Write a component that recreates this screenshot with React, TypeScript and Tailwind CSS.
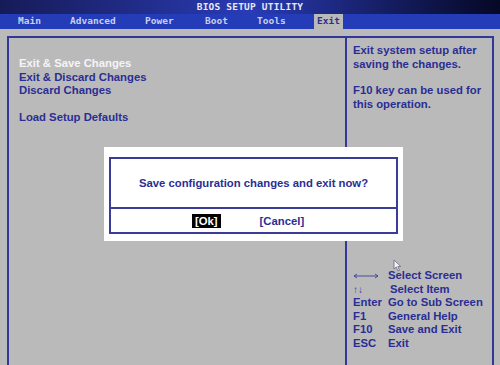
import React from 'react'

const mono = { fontFamily: '"DejaVu Sans Mono", "Liberation Mono", monospace' }

const menu = [
  { label: 'Main', w: 'w-[52px]' },
  { label: 'Advanced', w: 'w-[75px]' },
  { label: 'Power', w: 'w-[60px]' },
  { label: 'Boot', w: 'w-[52px]' },
  { label: 'Tools', w: 'w-[57px]' },
]

const legend = [
  { key: 'arrows', desc: 'Select Screen' },
  { key: '\u2191\u2193', desc: 'Select Item' },
  { key: 'Enter', desc: 'Go to Sub Screen' },
  { key: 'F1', desc: 'General Help' },
  { key: 'F10', desc: 'Save and Exit' },
  { key: 'ESC', desc: 'Exit' },
]

function LeftRight() {
  return (
    <svg width="26" height="8" viewBox="0 0 26 8" className="mt-[3px]">
      <path d="M1 4 H25 M1 4 L4 2 M1 4 L4 6 M25 4 L22 2 M25 4 L22 6" stroke="#3a3e9c" strokeWidth="0.9" fill="none" />
    </svg>
  )
}

export default function App() {
  return (
    <div
      className="relative w-[500px] h-[365px] overflow-hidden bg-[#bababa] flex flex-col"
      style={{ fontFamily: '"Liberation Sans", Arial, sans-serif' }}
    >
      {/* title bar */}
      <div
        className="h-[14px] shrink-0 bg-gradient-to-r from-[#161b58] via-[#2a3bb5] to-[#060826] flex items-center justify-center text-[9.5px] font-bold text-[#e6e8f4] tracking-[0.2px]"
        style={mono}
      >
        BIOS SETUP UTILITY
      </div>

      {/* menu bar */}
      <div className="h-[15px] shrink-0 bg-[#243cb8] flex items-center pl-[18px] text-[9.5px] font-bold text-[#c9d0ea]" style={mono}>
        {menu.map((m) => (
          <span key={m.label} className={m.w}>{m.label}</span>
        ))}
        <span className="h-[15px] flex items-center bg-[#bababa] text-[#2a2f8f] px-[3px]">Exit</span>
      </div>

      {/* main frame */}
      <div className="flex-1 pt-[7px] pl-[7px] pr-[6px]">
        <div className="h-full flex border-t-2 border-l-2 border-r-2 border-[#34379a]">
          <div className="w-[338px] shrink-0 border-r-2 border-[#34379a] pl-[10px] pt-[19px] text-[11.3px] font-bold leading-[13.5px] text-[#2a2e94]">
            <div className="text-[#f4f4f8]">Exit &amp; Save Changes</div>
            <div>Exit &amp; Discard Changes</div>
            <div>Discard Changes</div>
            <div className="mt-[13px]">Load Setup Defaults</div>
          </div>
          <div className="flex-1 flex flex-col pl-[6px] pt-[6px] text-[11.3px] font-bold leading-[13.5px] text-[#2a2e94]">
            <div>Exit system setup after</div>
            <div>saving the changes.</div>
            <div className="mt-[13px]">F10 key can be used for</div>
            <div>this operation.</div>
            <div className="mt-[158px]">
              {legend.map((l) => (
                <div key={l.desc} className="flex">
                  <span className="w-[35px] flex">
                    {l.key === 'arrows' ? (
                      <LeftRight />
                    ) : l.key === '\u2191\u2193' ? (
                      <span className="font-normal text-[10px] text-[#3a3e9c]">{l.key}</span>
                    ) : (
                      l.key
                    )}
                  </span>
                  <span className={l.desc === 'Select Item' ? 'pl-[2px]' : ''}>{l.desc}</span>
                </div>
              ))}
            </div>
          </div>
        </div>
      </div>

      {/* dialog */}
      <div className="absolute left-[104px] top-[147px] w-[299px] h-[94px] bg-white p-[5px] pt-[10px] pb-[7px]">
        <div className="h-full border-2 border-[#3a3d98] flex flex-col">
          <div className="h-[50px] flex items-center justify-center text-[11.3px] font-bold text-[#2a2e94] border-b-2 border-[#3a3d98]">
            Save configuration changes and exit now?
          </div>
          <div className="flex-1 flex items-center text-[11.3px] font-bold pt-[1px]">
            <span className="ml-[81px] bg-black text-white px-[3px] leading-[14px]">[Ok]</span>
            <span className="ml-[39px] text-[#2a2e94]">[Cancel]</span>
          </div>
        </div>
      </div>

      {/* mouse pointer */}
      <svg className="absolute left-[393px] top-[259px]" width="9" height="13" viewBox="0 0 9 13">
        <path d="M1 1 L1 10 L3.2 8 L5 12 L6.5 11.3 L4.8 7.5 L7.8 7.5 Z" fill="#f2f2f2" stroke="#6a6a80" strokeWidth="0.8" />
      </svg>
    </div>
  )
}
